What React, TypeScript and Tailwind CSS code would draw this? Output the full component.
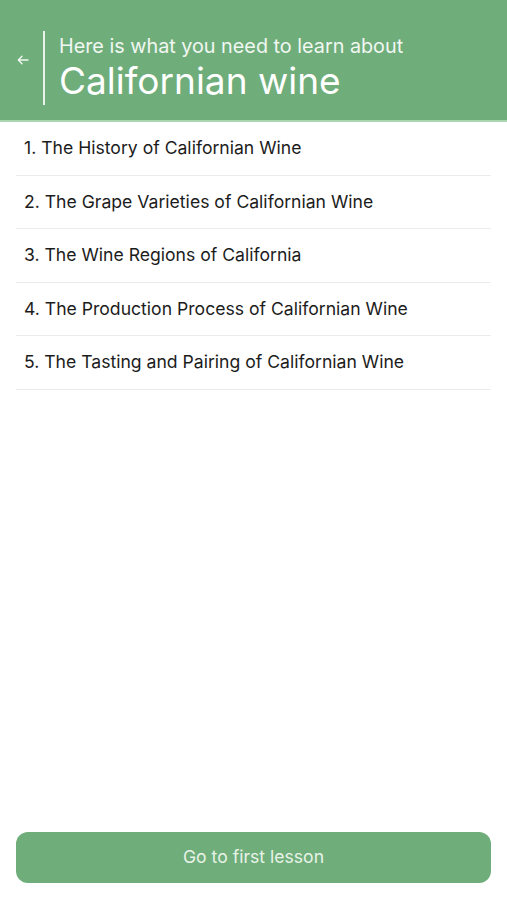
import React from "react";

const lessons = [
  "1. The History of Californian Wine",
  "2. The Grape Varieties of Californian Wine",
  "3. The Wine Regions of California",
  "4. The Production Process of Californian Wine",
  "5. The Tasting and Pairing of Californian Wine",
];

const App = () => {
  return (
    <div
      className="flex flex-col h-[900px] w-full bg-white"
      style={{ fontFamily: "Inter, 'Noto Sans', sans-serif" }}
    >
      <header className="h-[122px] bg-[#6fad7a] border-b-2 border-[#a9d6b0] flex items-center">
        <button type="button" className="w-[43px] flex justify-center pl-[2px] text-white/90">
          <svg width="12" height="10" viewBox="0 0 12 10" fill="none" stroke="currentColor" strokeWidth="1.4" strokeLinecap="round" strokeLinejoin="round">
            <path d="M11 5H1.5M5 1.2L1.3 5 5 8.8" />
          </svg>
        </button>
        <div className="h-[74px] w-[2px] bg-white/85 mt-[16px]" />
        <div className="pl-[14px] mt-[16px] text-white">
          <p className="text-[19.8px] leading-[24px] text-white/90">Here is what you need to learn about</p>
          <h1 className="text-[37px] leading-[44px] mt-[1px]">Californian wine</h1>
        </div>
      </header>

      <ul className="px-4">
        {lessons.map((lesson) => (
          <li
            key={lesson}
            className="h-[53.5px] flex items-center pl-2 border-b border-[#ececec] text-[17.6px] text-[#1c1c1c]"
          >
            {lesson}
          </li>
        ))}
      </ul>

      <div className="flex-1" />

      <div className="px-4 pb-[17px]">
        <button
          type="button"
          className="w-full h-[51px] rounded-xl bg-[#6fad7a] text-[17.6px] text-[#e8f3e8]"
        >
          Go to first lesson
        </button>
      </div>
    </div>
  );
};

export default App;
